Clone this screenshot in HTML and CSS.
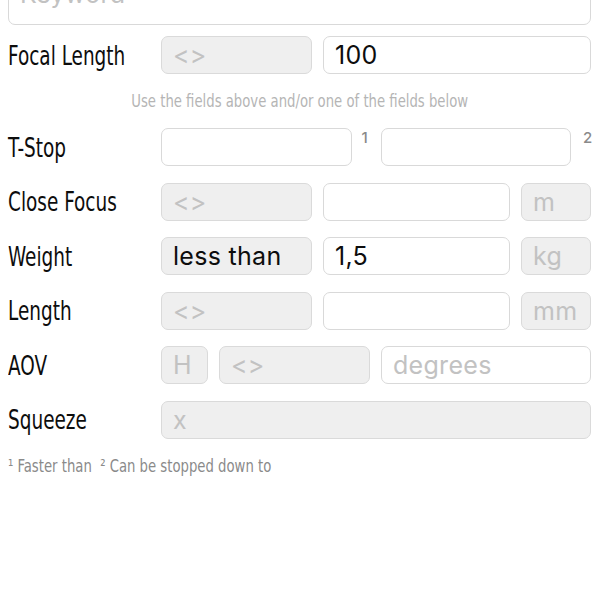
FILE: index.html
```html
<!DOCTYPE html>
<html>
<head>
<meta charset="utf-8">
<link rel="stylesheet" href="styles.css">
</head>
<body>
<div class="form">
  <div class="field keyword placeholder">Keyword</div>

  <div class="row">
    <div class="label"><span class="narrow">Focal Length</span></div>
    <div class="controls">
      <div class="field disabled placeholder w151">&lt;&gt;</div>
      <div class="field grow">100</div>
    </div>
  </div>

  <div class="helper"><span class="narrow-small">Use the fields above and/or one of the fields below</span></div>

  <div class="row">
    <div class="label"><span class="narrow">T-Stop</span></div>
    <div class="controls tight">
      <div class="field grow"></div>
      <div class="sup sup1">1</div>
      <div class="field grow"></div>
      <div class="sup sup2">2</div>
    </div>
  </div>

  <div class="row">
    <div class="label"><span class="narrow">Close Focus</span></div>
    <div class="controls">
      <div class="field disabled placeholder w151">&lt;&gt;</div>
      <div class="field grow"></div>
      <div class="field disabled placeholder w70">m</div>
    </div>
  </div>

  <div class="row">
    <div class="label"><span class="narrow">Weight</span></div>
    <div class="controls">
      <div class="field disabled w151">less than</div>
      <div class="field grow">1,5</div>
      <div class="field disabled placeholder w70">kg</div>
    </div>
  </div>

  <div class="row">
    <div class="label"><span class="narrow">Length</span></div>
    <div class="controls">
      <div class="field disabled placeholder w151">&lt;&gt;</div>
      <div class="field grow"></div>
      <div class="field disabled placeholder w70">mm</div>
    </div>
  </div>

  <div class="row">
    <div class="label"><span class="narrow">AOV</span></div>
    <div class="controls">
      <div class="field disabled placeholder w47">H</div>
      <div class="field disabled placeholder w151">&lt;&gt;</div>
      <div class="field grow placeholder">degrees</div>
    </div>
  </div>

  <div class="row">
    <div class="label"><span class="narrow">Squeeze</span></div>
    <div class="controls">
      <div class="field disabled placeholder grow">x</div>
    </div>
  </div>

  <div class="footnote"><span class="narrow-small left">¹ Faster than&nbsp; ² Can be stopped down to</span></div>
</div>
</body>
</html>
```

FILE: styles.css
```css
html, body {
  margin: 0;
  padding: 0;
  background: #ffffff;
}

.form {
  margin-top: -37px;
  padding: 0 9px 0 8px;
  display: flex;
  flex-direction: column;
  gap: 16.5px;
}

.field {
  box-sizing: border-box;
  height: 38px;
  border: 1px solid #d9d9d9;
  border-radius: 7px;
  background: #ffffff;
  padding: 0 11px;
  display: flex;
  align-items: center;
  font-family: "Inter", "Liberation Sans", sans-serif;
  font-size: 25px;
  letter-spacing: 0.3px;
  color: #0d0d0d;
  white-space: nowrap;
  overflow: hidden;
}

.field.disabled {
  background: #efefef;
  border-color: #dadada;
}

.field.placeholder {
  color: #c2c2c2;
}

.keyword {
  height: 62px;
  margin-bottom: -5.5px;
}

.row {
  display: flex;
  align-items: center;
  height: 38px;
}

.label {
  width: 153px;
  flex: none;
  font-family: "DejaVu Sans Condensed", "DejaVu Sans", sans-serif;
  font-size: 27px;
  color: #0d0d0d;
  white-space: nowrap;
}

.narrow {
  display: inline-block;
  transform: scaleX(0.76);
  transform-origin: left center;
}

.controls {
  flex: 1;
  display: flex;
  gap: 11px;
  height: 38px;
}

.controls.tight {
  gap: 0;
}

.grow {
  flex: 1;
  min-width: 0;
}

.w151 { width: 151px; flex: none; }
.w70 { width: 70px; flex: none; }
.w47 { width: 47px; flex: none; }

.sup {
  flex: none;
  box-sizing: border-box;
  font-family: "Inter", "Liberation Sans", sans-serif;
  font-size: 15px;
  font-weight: 500;
  color: #8a8a8a;
  line-height: 1;
  padding-top: 2px;
}

.sup1 { width: 29px; padding-left: 10px; }
.sup2 { width: 20px; padding-left: 12px; }

.helper {
  height: 21px;
  line-height: 21px;
  text-align: center;
  font-family: "DejaVu Sans Condensed", "DejaVu Sans", sans-serif;
  font-size: 17px;
  color: #b5b5b5;
  white-space: nowrap;
}

.narrow-small {
  display: inline-block;
  transform: scaleX(0.865);
  transform-origin: center center;
}

.narrow-small.left {
  transform-origin: left center;
}

.footnote {
  margin-top: 1px;
  font-family: "DejaVu Sans Condensed", "DejaVu Sans", sans-serif;
  font-size: 17px;
  color: #8a8a8a;
  white-space: nowrap;
}
```
